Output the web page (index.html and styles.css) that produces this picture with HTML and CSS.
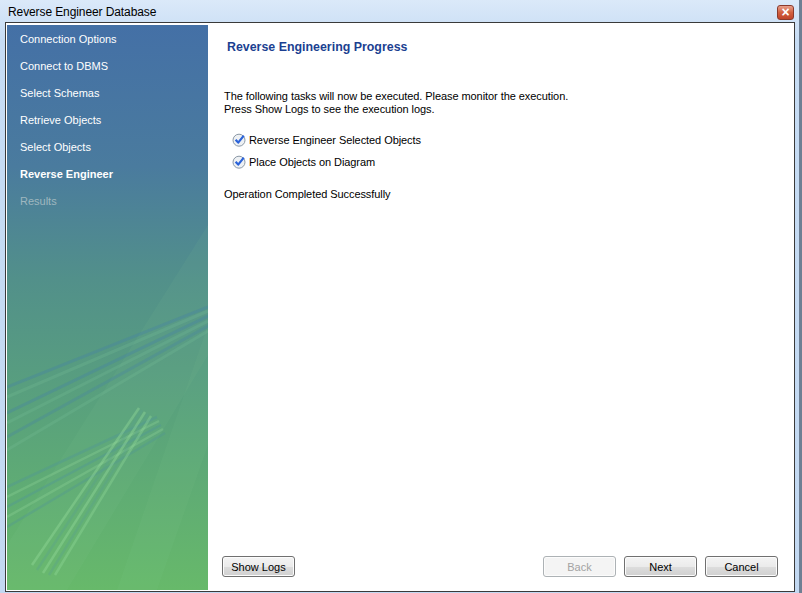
FILE: index.html
```html
<!DOCTYPE html>
<html lang="en">
<head>
  <meta charset="UTF-8">
  <title>Reverse Engineer Database</title>
  <link rel="stylesheet" href="styles.css">
</head>
<body>
  <div class="window">
    <div class="titlebar">
      <span class="title">Reverse Engineer Database</span>
      <span class="close-btn">&#215;</span>
    </div>
    <div class="client">
      <div class="sidebar">
        <svg class="deco" width="201" height="565" viewBox="0 0 201 565">
          <polygon points="201,200 201,330 60,565 0,565 0,520" fill="rgba(140,210,150,0.08)"/>
          <polygon points="201,300 201,420 150,565 110,565" fill="rgba(140,210,150,0.07)"/>
          <g stroke-width="3" fill="none">
            <line x1="201" y1="282" x2="0" y2="362" stroke="rgba(70,130,165,0.35)"/>
            <line x1="201" y1="286" x2="0" y2="372" stroke="rgba(120,190,150,0.25)"/>
            <line x1="201" y1="291" x2="0" y2="388" stroke="rgba(70,130,165,0.35)"/>
            <line x1="201" y1="296" x2="0" y2="398" stroke="rgba(120,190,150,0.25)"/>
            <line x1="201" y1="301" x2="0" y2="412" stroke="rgba(70,130,165,0.30)"/>
            <line x1="201" y1="306" x2="0" y2="425" stroke="rgba(120,190,150,0.25)"/>
          </g>
          <g stroke-width="2.5" fill="none">
            <line x1="150" y1="392" x2="0" y2="462" stroke="rgba(80,150,150,0.40)"/>
            <line x1="152" y1="396" x2="0" y2="472" stroke="rgba(140,210,150,0.35)"/>
            <line x1="154" y1="400" x2="0" y2="482" stroke="rgba(80,150,150,0.40)"/>
            <line x1="156" y1="404" x2="0" y2="492" stroke="rgba(140,210,150,0.35)"/>
            <line x1="158" y1="408" x2="0" y2="502" stroke="rgba(80,150,150,0.35)"/>
          </g>
          <g stroke-width="2.5" fill="none">
            <line x1="132" y1="383" x2="25" y2="540" stroke="rgba(150,220,155,0.40)"/>
            <line x1="135" y1="385" x2="30" y2="545" stroke="rgba(90,160,140,0.35)"/>
            <line x1="138" y1="387" x2="36" y2="548" stroke="rgba(150,220,155,0.40)"/>
            <line x1="141" y1="389" x2="42" y2="550" stroke="rgba(90,160,140,0.35)"/>
            <line x1="144" y1="391" x2="48" y2="550" stroke="rgba(150,220,155,0.35)"/>
          </g>
        </svg>
        <ul class="steps">
          <li>Connection Options</li>
          <li>Connect to DBMS</li>
          <li>Select Schemas</li>
          <li>Retrieve Objects</li>
          <li>Select Objects</li>
          <li class="current">Reverse Engineer</li>
          <li class="pending">Results</li>
        </ul>
      </div>
      <div class="content">
        <div class="main">
          <h1>Reverse Engineering Progress</h1>
          <p class="intro">The following tasks will now be executed. Please monitor the execution.<br>Press Show Logs to see the execution logs.</p>
          <ul class="tasks">
            <li>
              <svg class="check" width="14" height="14" viewBox="0 0 14 14">
                <circle cx="7" cy="7.2" r="6" fill="#eef1f4" stroke="#8b98a6" stroke-width="1"/>
                <path d="M3.6 6.8 L6.2 9.6 L11.8 2.6" fill="none" stroke="#2b63d9" stroke-width="2.2" stroke-linejoin="round"/>
              </svg>
              <span>Reverse Engineer Selected Objects</span>
            </li>
            <li>
              <svg class="check" width="14" height="14" viewBox="0 0 14 14">
                <circle cx="7" cy="7.2" r="6" fill="#eef1f4" stroke="#8b98a6" stroke-width="1"/>
                <path d="M3.6 6.8 L6.2 9.6 L11.8 2.6" fill="none" stroke="#2b63d9" stroke-width="2.2" stroke-linejoin="round"/>
              </svg>
              <span>Place Objects on Diagram</span>
            </li>
          </ul>
          <p class="status">Operation Completed Successfully</p>
        </div>
        <div class="buttons">
          <button class="btn">Show Logs</button>
          <div class="spacer"></div>
          <button class="btn" disabled>Back</button>
          <button class="btn">Next</button>
          <button class="btn">Cancel</button>
        </div>
      </div>
    </div>
  </div>
</body>
</html>
```

FILE: styles.css
```css
/* general */
* {
  margin: 0;
  padding: 0;
  box-sizing: border-box;
  font-family: "Liberation Sans", Arial, sans-serif;
}

body {
  width: 802px;
  height: 593px;
  overflow: hidden;
  background-color: #c4daf2;
}

.window {
  width: 802px;
  height: 593px;
  display: flex;
  flex-direction: column;
  background: linear-gradient(to bottom, #dbe9f9, #c6dcf4 40px, #c2d8f1);
  border-right: 3px solid #6e7f93;
}

.titlebar {
  height: 22px;
  display: flex;
  align-items: center;
  padding-left: 8px;
  padding-right: 5px;
}

.title {
  flex: 1;
  font-size: 12px;
  letter-spacing: -0.1px;
  color: #000;
  padding-top: 1px;
}

.close-btn {
  width: 17px;
  height: 15px;
  margin-top: 2px;
  display: flex;
  align-items: center;
  justify-content: center;
  color: #fff;
  font-size: 14px;
  font-weight: bold;
  line-height: 1;
  background: linear-gradient(to bottom, #e8a08c, #d2603f 50%, #c0442a);
  border: 1px solid #8a3a2c;
  border-radius: 3px;
}

.client {
  height: 570px;
  margin-left: 5px;
  margin-right: 4px;
  display: flex;
  padding: 2px 0 1px 1px;
  background-color: #fff;
  border: 1px solid #3a3a3a;
}

/* sidebar */
.sidebar {
  width: 201px;
  position: relative;
  overflow: hidden;
  background: linear-gradient(to bottom, #4470a6 0%, #4a7b9e 25%, #52908a 45%, #5aa37b 70%, #67b96a 100%);
}

.deco {
  position: absolute;
  left: 0;
  top: 0;
}

.steps {
  list-style: none;
  position: relative;
  padding-top: 1px;
}

.steps li {
  height: 27px;
  line-height: 27px;
  padding-left: 13px;
  font-size: 11px;
  color: #fff;
}

.steps li.current {
  font-weight: bold;
}

.steps li.pending {
  color: #9fb7bf;
}

/* content */
.content {
  flex: 1;
  display: flex;
  flex-direction: column;
  padding: 0 16px 13px 14px;
}

.main {
  flex: 1;
  padding-left: 2px;
}

h1 {
  font-size: 12.4px;
  line-height: 16px;
  color: #1b3f91;
  margin-top: 14px;
  margin-left: 3px;
}

.intro {
  font-size: 11px;
  letter-spacing: -0.07px;
  line-height: 13px;
  color: #000;
  margin-top: 35px;
}

.tasks {
  list-style: none;
  margin-top: 13px;
  padding-left: 8px;
}

.tasks li {
  height: 22px;
  display: flex;
  align-items: center;
  gap: 3px;
  font-size: 11px;
  letter-spacing: -0.07px;
  color: #000;
}

.status {
  font-size: 11px;
  letter-spacing: -0.07px;
  line-height: 13px;
  color: #000;
  margin-top: 15px;
}

.buttons {
  display: flex;
  gap: 8px;
}

.spacer {
  flex: 1;
}

.btn {
  width: 73px;
  height: 21px;
  font-size: 11px;
  color: #000;
  background: linear-gradient(to bottom, #f4f4f4, #ebebeb 50%, #dddddd 51%, #d0d0d0);
  border: 1px solid #707070;
  border-radius: 3px;
  box-shadow: inset 0 0 0 1px #fcfcfc;
}

.btn:disabled {
  color: #a3a3a3;
  background: #f4f4f4;
  border-color: #adb2b5;
}
```
